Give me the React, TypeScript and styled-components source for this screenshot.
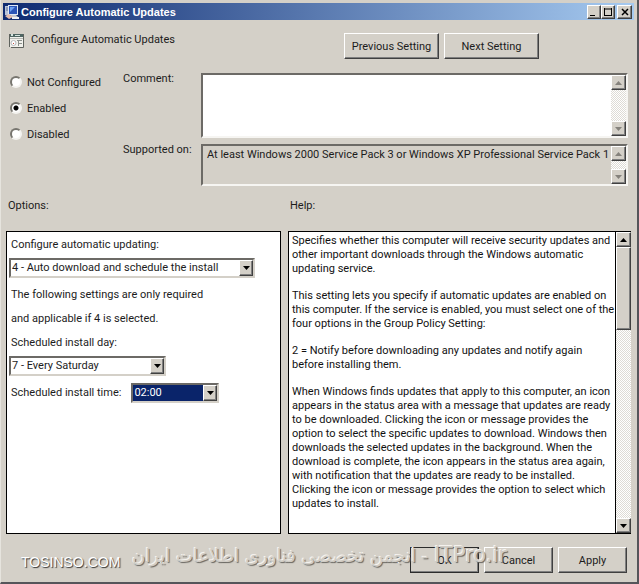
import React from "react";
import styled, { createGlobalStyle, css } from "styled-components";

const face = "#d4d0c8";
const ui = `Roboto, "Open Sans", sans-serif`;

const GlobalStyle = createGlobalStyle`
  * { box-sizing: border-box; }
  body { margin: 0; background: ${face}; }
  button, select, textarea { font: inherit; color: inherit; }
`;

const raised = css`
  border: 1px solid;
  border-color: #fff #404040 #404040 #fff;
  box-shadow: inset -1px -1px 0 #808080;
  background: ${face};
`;

const sunken = css`
  border: 2px solid;
  border-color: #6c6a66 #f6f5f2 #f6f5f2 #6c6a66;
`;

const Window = styled.main`
  display: flex;
  flex-direction: column;
  min-height: 100vh;
  padding: 3px 3px 0 2px;
  border: 1px solid #e6e4de;
  border-right: 2px solid #55555a;
  border-bottom: 2px solid #55555a;
  border-top: 0;
  background: ${face};
  color: #1c1c1c;
  font: 11px/16px ${ui};
`;

const TitleBar = styled.header`
  display: flex;
  align-items: center;
  height: 17px;
  padding: 0 2px 0 1px;
  background: linear-gradient(90deg, #0e2a70, #a6caf0);
  color: #fff;
`;

const Title = styled.h1`
  flex: 1;
  margin: 0 0 0 1px;
  font: bold 11px/16px "Liberation Sans", sans-serif;
`;

const TitleButton = styled.button<{ $apart?: boolean }>`
  ${raised}
  display: grid;
  place-items: center;
  width: ${(p) => (p.$apart ? 15 : 14)}px;
  height: 14px;
  margin-left: ${(p) => (p.$apart ? 2 : 0)}px;
  padding: 0;
  color: #000;
`;

const Heading = styled.section`
  display: flex;
  align-items: flex-start;
  padding: 13px 95px 0 6px;
`;

const PolicyName = styled.h2`
  flex: 1;
  margin: -1px 0 0 6px;
  font: 11px/16px ${ui};
`;

const ButtonRow = styled.div`
  display: flex;
  gap: 5px;
`;

const PushButton = styled.button<{ $wide?: boolean; $primary?: boolean }>`
  ${raised}
  width: ${(p) => (p.$wide ? 95 : 69)}px;
  height: 26px;
  padding: 1px 0 0;
  ${(p) => p.$primary && css`outline: 1px solid #2c2c2c; outline-offset: -1px;`}
`;

const StateGrid = styled.section`
  display: grid;
  grid-template-columns: 115px 78px 1fr;
  padding: 14px 6px 0 5px;
`;

const RadioList = styled.div`
  display: flex;
  flex-direction: column;
  grid-row: span 2;
  gap: 10px;
  padding-top: 2px;
`;

const RadioLabel = styled.label`
  display: flex;
  align-items: center;
  gap: 5px;
`;

const Radio = styled.input`
  appearance: none;
  width: 12px;
  height: 12px;
  margin: 0 0 2px 2px;
  border: 2px solid;
  border-color: #77756f #f4f3f0 #f4f3f0 #77756f;
  border-radius: 50%;
  background: #fff;
  &:checked {
    background: radial-gradient(circle, #000 2px, #fff 3px);
  }
`;

const FieldLabel = styled.label`
  margin-top: -2px;
`;

const Field = styled.div<{ $readOnly?: boolean }>`
  ${sunken}
  display: flex;
  height: ${(p) => (p.$readOnly ? 42 : 65)}px;
  margin-bottom: 6px;
  background: ${(p) => (p.$readOnly ? face : "#fff")};
`;

const Text = styled.textarea`
  flex: 1;
  min-width: 0;
  padding: 1px 0 0 4px;
  border: 0;
  outline: 0;
  resize: none;
  overflow: hidden;
  background: transparent;
`;

const Track = styled.div`
  display: flex;
  flex-direction: column;
  justify-content: space-between;
  width: 15px;
  background: repeating-conic-gradient(#fff 0 25%, #dedbd5 0 50%) 0 0 / 2px 2px;
`;

const ArrowButton = styled.button`
  ${raised}
  display: grid;
  place-items: center;
  width: 100%;
  height: 15px;
  padding: 0;
`;

const Thumb = styled.div`
  ${raised}
  flex: none;
  height: 83px;
  margin-bottom: auto;
`;

const Panels = styled.section`
  display: grid;
  grid-template-columns: 275fr 343fr;
  grid-template-rows: auto 1fr;
  column-gap: 7px;
  row-gap: 17px;
  flex: 1;
  padding: 6px 3px 0 3px;
`;

const PanelTitle = styled.h3`
  margin: 0 0 0 2px;
  font: 11px/16px ${ui};
`;

const OptionsPanel = styled.div`
  display: flex;
  flex-direction: column;
  align-items: flex-start;
  padding: 1px 3px 0 2px;
  border: 1px solid #000;
  background: #fff;
`;

const OptionText = styled.label`
  padding: 0 2px;
  line-height: 24px;
`;

const OptionNote = styled.p`
  margin: 0;
  padding: 0 2px;
  line-height: 24px;
`;

const OptionRow = styled.div`
  display: flex;
  align-items: center;
  gap: 8px;
`;

const Combo = styled.span<{ $width: number; $spaced?: boolean }>`
  ${sunken}
  border-color: #6c6a66 #d4d0c8 #d4d0c8 #6c6a66;
  position: relative;
  display: flex;
  width: ${(p) => p.$width}px;
  height: 20px;
  margin: ${(p) => (p.$spaced ? "1px 0 5px" : "0")};
  background: #fff;
`;

const Select = styled.select<{ $active?: boolean }>`
  appearance: none;
  flex: 1;
  min-width: 0;
  padding: 0 16px 0 1px;
  border: 0;
  outline: 0;
  background: ${(p) => (p.$active ? "#0a246a" : "#fff")};
  color: ${(p) => (p.$active ? "#fff" : "inherit")};
`;

const ComboArrow = styled.span`
  ${raised}
  position: absolute;
  top: 0;
  right: 0;
  bottom: 0;
  display: grid;
  place-items: center;
  width: 14px;
  pointer-events: none;
`;

const HelpPanel = styled.div`
  display: flex;
  border: 1px solid #000;
  border-right: 0;
  background: #fff;
`;

const HelpText = styled.div`
  flex: 1;
  min-width: 0;
  padding: 2px 0 0 3px;
  border-right: 1px solid #000;
  color: #111;
`;

const Paragraph = styled.p`
  margin: 0 0 13px;
  line-height: 14px;
  white-space: pre;
`;

const Footer = styled.footer`
  position: relative;
  display: flex;
  align-items: flex-start;
  justify-content: space-between;
  padding: 13px 7px 9px 18px;
`;

const SiteMark = styled.span`
  margin-top: 6px;
  font: 14px/18px "Liberation Sans", sans-serif;
  color: #fff;
  text-shadow: 1px 1px 1px #333;
`;

const Watermark = styled.span`
  position: absolute;
  top: 6px;
  right: 127px;
  direction: rtl;
  white-space: nowrap;
  font: 18px/30px "DejaVu Sans", sans-serif;
  color: #d0ccc5;
  text-shadow: -1px -1px 0 #f4f2ee, 1px 1px 1px #66645f;
  pointer-events: none;
`;

const WatermarkSite = styled.bdi`
  font-size: 21px;
`;

const Arrow = ({ up, dim }: { up?: boolean; dim?: boolean }) => (
  <svg width="7" height="4" viewBox="0 0 7 4" aria-hidden="true">
    <path d={up ? "M0 4h7L3.5 0z" : "M0 0h7L3.5 4z"} fill={dim ? "#85827c" : "#000"} />
  </svg>
);

const ScrollBar = ({ dim, thumb }: { dim?: boolean; thumb?: boolean }) => (
  <Track>
    <ArrowButton aria-label="Scroll up" disabled={dim}><Arrow up dim={dim} /></ArrowButton>
    {thumb && <Thumb />}
    <ArrowButton aria-label="Scroll down" disabled={dim}><Arrow dim={dim} /></ArrowButton>
  </Track>
);

const ComputerIcon = () => (
  <svg width="16" height="16" viewBox="0 0 16 16" aria-hidden="true">
    <path d="M1 2h4v9H1z" fill="#b9c4d8" />
    <path d="M2 4h2M2 6h2" stroke="#5a6f99" />
    <path d="M4 1h10v10H4z" fill="#dfe8f4" />
    <path d="M5 2h8v8H5z" fill="#2a55b8" />
    <path d="M6 3h5L6 8z" fill="#6fa2f0" />
    <path d="M7 11h5l2 2H6z" fill="#c4c8d0" />
    <path d="M1 12l4-2 4 3-4 2z" fill="#e3bcae" />
    <path d="M8 13h7v2H8z" fill="#eef1f5" />
  </svg>
);

const PolicyIcon = () => (
  <svg width="16" height="16" viewBox="0 0 16 16" aria-hidden="true">
    <path d="M1 1h13v13H1z" fill="#f1f1ec" />
    <path d="M1 1h13v3H1z" fill="#4f6663" />
    <path d="M2 1h2v2H2zM6 2h5v1H6z" fill="#d5e4e0" />
    <path d="M1 5.500h13" stroke="#b5b8b4" />
    <circle cx="4.500" cy="10" r="2.500" fill="#fff" stroke="#b4b7bb" />
    <path d="M4 10h1v1H4z" fill="#c2503e" />
    <path d="M8 7.500h5M9.500 8v5M10 10.500h3" stroke="#8b908c" />
    <path d="M14.500 1v13.500H2M.5 1v13" fill="none" stroke="#5f635e" />
  </svg>
);

const states = ["Not Configured", "Enabled", "Disabled"];

const help = [
  `Specifies whether this computer will receive security updates and
other important downloads through the Windows automatic
updating service.`,
  `This setting lets you specify if automatic updates are enabled on
this computer. If the service is enabled, you must select one of the
four options in the Group Policy Setting:`,
  `2 = Notify before downloading any updates and notify again
before installing them.`,
  `When Windows finds updates that apply to this computer, an icon
appears in the status area with a message that updates are ready
to be downloaded. Clicking the icon or message provides the
option to select the specific updates to download. Windows then
downloads the selected updates in the background. When the
download is complete, the icon appears in the status area again,
with notification that the updates are ready to be installed.
Clicking the icon or message provides the option to select which
updates to install.`,
];

export default function App() {
  return (
    <Window>
      <GlobalStyle />
      <TitleBar>
        <ComputerIcon />
        <Title>Configure Automatic Updates</Title>
        <TitleButton aria-label="Minimize">
          <svg width="10" height="10"><path d="M1 8h5v1H1z" fill="#000" /></svg>
        </TitleButton>
        <TitleButton aria-label="Maximize">
          <svg width="10" height="10"><path d="M1 2h8M1.500 1v8M8.500 1v8M1 8.500h8" fill="none" stroke="#000" /></svg>
        </TitleButton>
        <TitleButton $apart aria-label="Close">
          <svg width="10" height="10"><path d="M2 2l6 6M8 2l-6 6" stroke="#000" strokeWidth="1.500" /></svg>
        </TitleButton>
      </TitleBar>

      <Heading>
        <PolicyIcon />
        <PolicyName>Configure Automatic Updates</PolicyName>
        <ButtonRow>
          <PushButton $wide>Previous Setting</PushButton>
          <PushButton $wide>Next Setting</PushButton>
        </ButtonRow>
      </Heading>

      <StateGrid>
        <RadioList role="radiogroup" aria-label="Policy state">
          {states.map((s) => (
            <RadioLabel key={s}>
              <Radio type="radio" name="state" defaultChecked={s === "Enabled"} />
              {s}
            </RadioLabel>
          ))}
        </RadioList>
        <FieldLabel htmlFor="comment">Comment:</FieldLabel>
        <Field>
          <Text id="comment" />
          <ScrollBar dim />
        </Field>
        <FieldLabel htmlFor="supported">Supported on:</FieldLabel>
        <Field $readOnly>
          <Text
            id="supported"
            readOnly
            defaultValue="At least Windows 2000 Service Pack 3 or Windows XP Professional Service Pack 1"
          />
          <ScrollBar dim />
        </Field>
      </StateGrid>

      <Panels>
        <PanelTitle>Options:</PanelTitle>
        <PanelTitle>Help:</PanelTitle>
        <OptionsPanel>
          <OptionText htmlFor="mode">Configure automatic updating:</OptionText>
          <Combo $width={246} $spaced>
            <Select id="mode"><option>4 - Auto download and schedule the install</option></Select>
            <ComboArrow><Arrow /></ComboArrow>
          </Combo>
          <OptionNote>The following settings are only required</OptionNote>
          <OptionNote>and applicable if 4 is selected.</OptionNote>
          <OptionText htmlFor="day">Scheduled install day:</OptionText>
          <Combo $width={157} $spaced>
            <Select id="day"><option>7 - Every Saturday</option></Select>
            <ComboArrow><Arrow /></ComboArrow>
          </Combo>
          <OptionRow>
            <OptionText htmlFor="time">Scheduled install time:</OptionText>
            <Combo $width={88}>
              <Select id="time" $active><option>02:00</option></Select>
              <ComboArrow><Arrow /></ComboArrow>
            </Combo>
          </OptionRow>
        </OptionsPanel>
        <HelpPanel>
          <HelpText>
            {help.map((h) => <Paragraph key={h}>{h}</Paragraph>)}
          </HelpText>
          <ScrollBar thumb />
        </HelpPanel>
      </Panels>

      <Footer>
        <SiteMark>TOSINSO.COM</SiteMark>
        <ButtonRow>
          <PushButton $primary>OK</PushButton>
          <PushButton>Cancel</PushButton>
          <PushButton>Apply</PushButton>
        </ButtonRow>
        <Watermark><WatermarkSite>ITPro.ir</WatermarkSite> - انجمن تخصصی فناوری اطلاعات ایران</Watermark>
      </Footer>
    </Window>
  );
}
